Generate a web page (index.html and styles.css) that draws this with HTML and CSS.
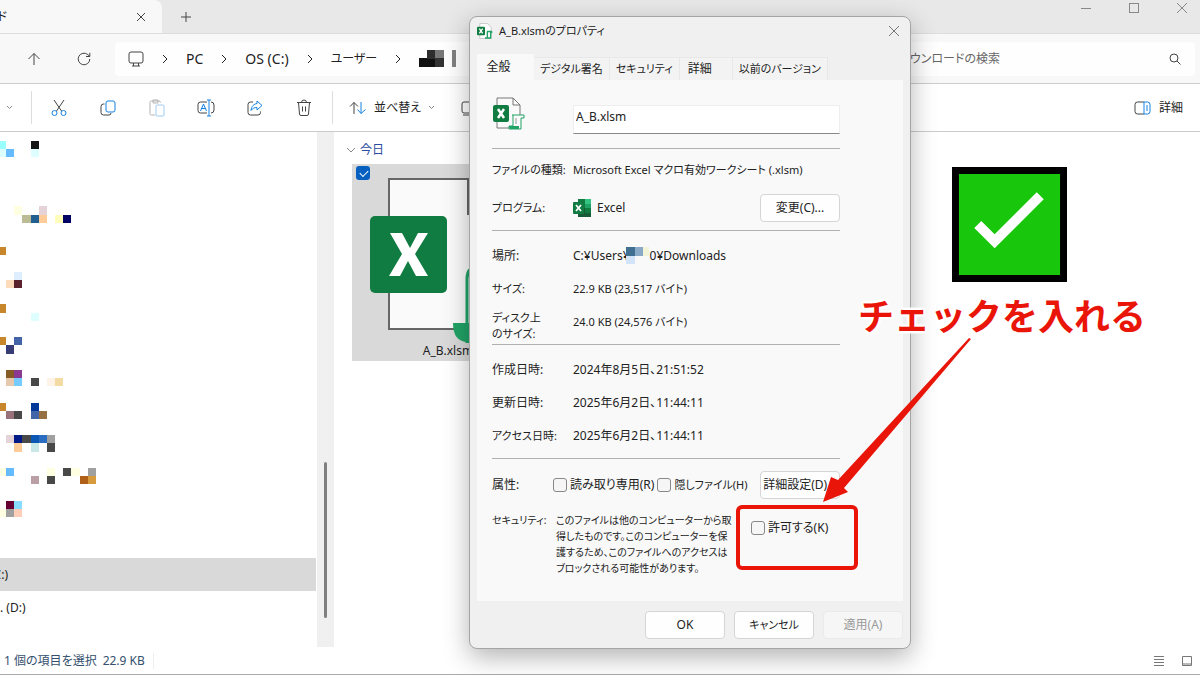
FILE: index.html
```
<!DOCTYPE html>
<html lang="ja">
<head>
    <meta charset="UTF-8">
    <meta name="viewport" content="width=device-width, initial-scale=1">
    <title>A_B.xlsmのプロパティ</title>
    <link rel="stylesheet" href="styles.css">
</head>
<body>

    <div class="explorer">

        <header class="tabbar">
            <div class="tab">
                <span class="tab-title">ド</span>
                <button class="plain" aria-label="タブを閉じる">
                    <svg width="10" height="10" viewBox="0 0 10 10"><path d="M1 1l8 8M9 1l-8 8"/></svg>
                </button>
            </div>
            <button class="plain new-tab" aria-label="新しいタブ">
                <svg width="12" height="12" viewBox="0 0 12 12"><path d="M6 1v10M1 6h10"/></svg>
            </button>
            <div class="window-buttons">
                <button class="plain" aria-label="最小化"><svg width="12" height="12" viewBox="0 0 12 12"><path d="M1 6.500h10"/></svg></button>
                <button class="plain" aria-label="最大化"><svg width="12" height="12" viewBox="0 0 12 12"><rect x="1.500" y="1.500" width="9" height="9"/></svg></button>
                <button class="plain" aria-label="閉じる"><svg width="12" height="12" viewBox="0 0 12 12"><path d="M1 1l10 10M11 1L1 11"/></svg></button>
            </div>
        </header>

        <div class="addressbar">
            <button class="plain" aria-label="上へ">
                <svg width="14" height="14" viewBox="0 0 14 14"><path d="M7 13V1.500M1.500 7L7 1.500 12.500 7"/></svg>
            </button>
            <button class="plain" aria-label="更新">
                <svg width="14" height="14" viewBox="0 0 14 14"><path d="M12.800 7a5.800 5.800 0 1 1-2-4.400L12.800 4.500M12.800 .8v3.700H9"/></svg>
            </button>
            <nav class="crumbs">
                <svg width="16" height="16" viewBox="0 0 16 16"><rect x="1" y="1" width="14" height="11" rx="2"/><path d="M5.500 12v3M10.500 12v3M4 15h8"/></svg>
                <svg class="chev" width="6" height="10" viewBox="0 0 6 10"><path d="M1 1l4 4-4 4"/></svg>
                <a href="#">PC</a>
                <svg class="chev" width="6" height="10" viewBox="0 0 6 10"><path d="M1 1l4 4-4 4"/></svg>
                <a href="#">OS (C:)</a>
                <svg class="chev" width="6" height="10" viewBox="0 0 6 10"><path d="M1 1l4 4-4 4"/></svg>
                <a href="#" class="kana">ユーザー</a>
                <svg class="chev" width="6" height="10" viewBox="0 0 6 10"><path d="M1 1l4 4-4 4"/></svg>
                <svg class="mosaic" width="38" height="17" viewBox="0 0 38 17">
                    <rect y="8" width="16" height="9" fill="#111"/><rect x="8" width="8" height="9" fill="#2e2e2e"/>
                    <rect x="16" width="9" height="9" fill="#777"/><rect x="16" y="8" width="9" height="9" fill="#333"/>
                    <rect x="33" width="4" height="17" fill="#808080"/>
                </svg>
            </nav>
            <label class="search">
                <input type="text" placeholder="ダウンロードの検索" aria-label="ダウンロードの検索">
                <svg width="12" height="12" viewBox="0 0 12 12"><circle cx="5" cy="5" r="4"/><path d="M8 8l3.500 3.500"/></svg>
            </label>
        </div>

        <div class="toolbar">
            <svg class="down" width="7" height="5" viewBox="0 0 7 5"><path d="M1 1l2.500 2.500L6 1"/></svg>
            <i class="split"></i>
            <div class="tools">
                <button class="plain" aria-label="切り取り">
                    <svg width="16" height="18" viewBox="0 0 16 18"><path d="M3 1l7.500 11M13 1L5.500 12"/><g class="blue"><circle cx="3.500" cy="14" r="2.500"/><circle cx="12.500" cy="14" r="2.500"/></g></svg>
                </button>
                <button class="plain" aria-label="コピー">
                    <svg width="16" height="18" viewBox="0 0 16 18"><path d="M4.500 5H3.500A2.500 2.500 0 0 0 1 7.500v6A2.500 2.500 0 0 0 3.500 16H9a2 2 0 0 0 2-2"/><rect class="blue" x="6" y="2" width="9" height="11" rx="2"/></svg>
                </button>
                <button class="plain" aria-label="貼り付け" disabled>
                    <svg width="16" height="18" viewBox="0 0 16 18"><path d="M6 16H2.500A1.500 1.500 0 0 1 1 14.500v-11A1.500 1.500 0 0 1 2.500 2H10a1.500 1.500 0 0 1 1.500 1.500M4 1h5v3H4z"/><rect class="blue" x="7" y="6" width="8" height="11" rx="1"/></svg>
                </button>
                <button class="plain" aria-label="名前の変更">
                    <svg width="18" height="18" viewBox="0 0 18 18"><path d="M10 3H3.500A2.500 2.500 0 0 0 1 5.500v6A2.500 2.500 0 0 0 3.500 14H10M14 3a3 3 0 0 1 3 3v5a3 3 0 0 1-3 3"/><path class="blue" d="M12 1v16M10 1h4M10 17h4M3.500 12l3-7 3 7M4.500 9.500h4"/></svg>
                </button>
                <button class="plain" aria-label="共有">
                    <svg width="16" height="18" viewBox="0 0 16 18"><path d="M6 3H3.500A2.500 2.500 0 0 0 1 5.500v8A2.500 2.500 0 0 0 3.500 16H11a2.500 2.500 0 0 0 2.500-2.500v-1"/><path class="blue" d="M10 2l5 4.500-5 4.500V8.500C7.500 8.500 6 9 4 11.500 4.500 7 7 5 10 4.500z"/></svg>
                </button>
                <button class="plain" aria-label="削除">
                    <svg width="16" height="18" viewBox="0 0 16 18"><path d="M1 3.500h14M5.500 3.500a2.500 2.500 0 0 1 5 0M2.500 3.500l1 11.500A1.500 1.500 0 0 0 5 16.500h6a1.500 1.500 0 0 0 1.500-1.500l1-11.500M6.500 7.500v5M9.500 7.500v5"/></svg>
                </button>
            </div>
            <i class="split"></i>
            <button class="plain sort">
                <svg width="18" height="14" viewBox="0 0 18 14"><path d="M5 13V1.500M1 5.500l4-4 4 4"/><path class="blue" d="M12 1v11.500M8.500 8.500l3.500 4 4.500-4"/></svg>
                並べ替え
                <svg class="down" width="7" height="5" viewBox="0 0 7 5"><path d="M1 1l2.500 2.500L6 1"/></svg>
            </button>
            <svg class="view" width="16" height="16" viewBox="0 0 16 16"><rect x="1" y="2" width="14" height="11" rx="2"/><path d="M2 15h12"/></svg>
            <button class="plain details">
                <svg width="17" height="14" viewBox="0 0 17 14"><path d="M10 1H3.500A2.500 2.500 0 0 0 1 3.500v7A2.500 2.500 0 0 0 3.500 13H10"/><path class="blue" d="M10 1h3.500A2.500 2.500 0 0 1 16 3.500v7a2.500 2.500 0 0 1-2.500 2.500H10zM12 5h2M12 7h2M12 9h2"/></svg>
                詳細
            </button>
        </div>

        <main class="body">
            <aside class="tree">
                <svg class="mosaic" width="98" height="376" viewBox="0.25 0 12 46" preserveAspectRatio="none">
                    <path fill="#9ff" d="M0 0h1v1H0z"/>
                    <path fill="#dff" d="M0 1h1v1H0zM4 1h1v1H4zM4 21h1v1H4z"/>
                    <path fill="#6bf" d="M1 1h1v1H1zM1 40h1v1H1z"/>
                    <path fill="#151515" d="M4 0h1v1H4z"/>
                    <path fill="#ffffe2" d="M2 8h1v1H2zM0 40h1v1H0zM6 40h1v1H6zM9 40h1v1H9zM0 45h1v1H0z"/>
                    <path fill="#e6d3d8" d="M5 8h1v1H5zM1 36h1v1H1z"/>
                    <path fill="#bcbc94" d="M3 9h1v1H3z"/>
                    <path fill="#205f8f" d="M4 9h1v1H4z"/>
                    <path fill="#ffcb98" d="M5 9h1v1H5zM2 37h1v1H2z"/>
                    <path fill="#ffb" d="M7 9h1v1H7z"/>
                    <path fill="#006" d="M8 9h1v1H8z"/>
                    <path fill="#c8862a" d="M0 13h1v1H0zM0 20h1v1H0zM0 24h1v1H0zM0 32h1v1H0z"/>
                    <path fill="#def" d="M2 16h1v1H2z"/>
                    <path fill="#fddcbc" d="M1 17h1v1H1z"/>
                    <path fill="#5a222c" d="M2 17h1v1H2z"/>
                    <path fill="#4464a8" d="M2 24h1v1H2zM4 33h1v1H4z"/>
                    <path fill="#383c74" d="M1 25h1v1H1z"/>
                    <path fill="#855c26" d="M1 28h1v1H1z"/>
                    <path fill="#8a3a90" d="M2 28h1v1H2z"/>
                    <path fill="#e7c9ae" d="M1 29h1v1H1z"/>
                    <path fill="#7cf" d="M2 29h1v1H2z"/>
                    <path fill="#484848" d="M4 29h1v1H4zM2 33h1v1H2zM3 36h1v1H3zM6 37h1v1H6zM8 40h1v1H8zM6 41h1v1H6z"/>
                    <path fill="#fff3e8" d="M6 29h1v1H6z"/>
                    <path fill="#f4dba4" d="M7 29h1v1H7z"/>
                    <path fill="#003899" d="M4 32h1v1H4z"/>
                    <path fill="#987279" d="M1 33h1v1H1z"/>
                    <path fill="#966f42" d="M5 33h1v1H5z"/>
                    <path fill="#001a88" d="M2 36h1v1H2z"/>
                    <path fill="#0a58b4" d="M4 36h1v1H4z"/>
                    <path fill="#2a6cc0" d="M5 36h1v1H5z"/>
                    <path fill="#a0a0a0" d="M6 36h1v1H6zM11 40h1v1h-1zM1 45h1v1H1z"/>
                    <path fill="#c8e8e8" d="M4 37h1v1H4z"/>
                    <path fill="#baa0a4" d="M4 41h1v1H4z"/>
                    <path fill="#b06018" d="M10 41h1v1h-1z"/>
                    <path fill="#d79b3e" d="M11 41h1v1h-1z"/>
                    <path fill="#603" d="M1 44h1v1H1z"/>
                    <path fill="#8df" d="M2 44h1v1H2z"/>
                    <path fill="#ffcdb8" d="M2 45h1v1H2z"/>
                </svg>
                <div class="drives">
                    <div class="drive selected"><span>C:)</span></div>
                    <div class="drive">. (D:)</div>
                </div>
            </aside>
            <div class="scrollbar"><div class="thumb"></div></div>
            <section class="files">
                <h2>
                    <svg class="down" width="10" height="7" viewBox="0 0 10 7"><path d="M1 1l4 4 4-4"/></svg>
                    今日
                </h2>
                <div class="file">
                    <input class="file-check" type="checkbox" aria-label="A_B.xlsm" checked>
                    <svg class="thumbnail" width="136" height="168" viewBox="0 0 136 168">
                        <path d="M19 4h79v35h39v115H19z" fill="#fafafa" stroke="#666" stroke-width="2"/>
                        <path d="M97 168V104q0-12 10-12h30v76z" fill="#fafafa" stroke="#21a366" stroke-width="3"/>
                        <path d="M83 148h53v19H98q-15 0-15-19z" fill="#21a366"/>
                        <rect y="41" width="77" height="77" rx="5" fill="#107c41"/>
                        <path d="M20 58h12l8 15 8-15h10L45 79l13 22H46l-8-15-8 15H19l13-22z" fill="#fff"/>
                    </svg>
                    <span class="file-name">A_B.xlsm</span>
                </div>
            </section>
        </main>

        <footer class="statusbar">
            <span>1 個の項目を選択</span>
            <span class="size">22.9 KB</span>
            <div class="layouts">
                <button class="plain" aria-label="一覧"><svg width="10" height="10" viewBox="0 0 10 10"><path d="M0 .5h10M0 3.500h10M0 6.500h10M0 9.500h10"/></svg></button>
                <button class="plain" aria-label="大アイコン"><svg width="10" height="10" viewBox="0 0 10 10"><path d="M.5 .5h9v9h-9zM.5 8h9"/></svg></button>
            </div>
        </footer>
    </div>

    <form class="dialog" role="dialog" aria-labelledby="dialog-title">
        <header class="titlebar">
            <svg width="16" height="16" viewBox="0 0 34 34"><path d="M6 1h16l8 8v24H6z" fill="#fff" stroke="#999"/><path d="M21 18h11M31 18v3M22 18v14h-5M22 32h7V18" fill="none" stroke="#21a366" stroke-width="3"/><rect y="8" width="17" height="18" rx="2" fill="#107c41" stroke="none"/><path d="M5 12l7 10M12 12L5 22" stroke="#fff" stroke-width="3"/></svg>
            <h1 id="dialog-title">A_B.xlsmのプロパティ</h1>
            <button type="button" class="plain" aria-label="閉じる"><svg width="12" height="12" viewBox="0 0 12 12"><path d="M1 1l10 10M11 1L1 11"/></svg></button>
        </header>

        <div class="tabs" role="tablist">
            <button type="button" role="tab" class="active">全般</button>
            <button type="button" role="tab">デジタル署名</button>
            <button type="button" role="tab">セキュリティ</button>
            <button type="button" role="tab" class="wide">詳細</button>
            <button type="button" role="tab">以前のバージョン</button>
        </div>

        <div class="panel">
            <div class="row name-row">
                <span class="label">
                    <svg width="34" height="34" viewBox="0 0 34 34"><path d="M5 1h16l7 7v23H5z" fill="#fafafa" stroke="#777"/><path d="M21 1v7h7" fill="none" stroke="#777"/><path d="M20 18h12v3h-3v11H17v-3h4V18" fill="#fafafa" stroke="#21a366"/><path d="M24 21v6" stroke="#999"/><path d="M17 29h10v3H19q-2 0-2-3z" fill="#21a366" stroke="none"/><rect x="1" y="8" width="16" height="17" rx="2" fill="#107c41" stroke="none"/><path d="M6 12l6 9M12 12l-6 9" stroke="#fff" stroke-width="2.500"/></svg>
                </span>
                <input type="text" value="A_B.xlsm" aria-label="ファイル名">
            </div>
            <hr>
            <div class="row type-row small"><span class="label">ファイルの種類:</span><span>Microsoft Excel マクロ有効ワークシート (.xlsm)</span></div>
            <div class="row program-row">
                <span class="label small">プログラム:</span>
                <svg class="excel" width="18" height="18" viewBox="0 0 18 18"><path d="M5 0h13v18H5z" fill="#21a366"/><path d="M5 0h7v9H5zM12 9h6v5h-6z" fill="#107c41"/><path d="M12 0h6v5h-6z" fill="#33c481"/><path d="M5 9h7v9H5zM12 14h6v4h-6z" fill="#185c37"/><rect y="3" width="11" height="12" rx="1" fill="#107c41"/><path d="M3 6l5 6M8 6l-5 6" stroke="#fff" stroke-width="1.800"/></svg>
                <span class="app">Excel</span>
                <button type="button" class="btn">変更(C)...</button>
            </div>
            <hr>
            <div class="group">
                <div class="row">
                    <span class="label">場所:</span>
                    <span>C:¥Users¥</span>
                    <svg class="mosaic user" width="24" height="17" viewBox="0 0 24 17"><rect width="9" height="9" fill="#416f91"/><rect x="9" width="8" height="9" fill="#8aa9c6"/><rect x="17" width="6" height="9" fill="#f3f3d8"/><rect y="9" width="9" height="8" fill="#d3e4fa"/></svg>
                    <span>0¥Downloads</span>
                </div>
                <div class="row small"><span class="label">サイズ:</span><span>22.9 KB (23,517 バイト)</span></div>
                <div class="row small"><span class="label two-line">ディスク上<br>のサイズ:</span><span>24.0 KB (24,576 バイト)</span></div>
            </div>
            <hr>
            <div class="group">
                <div class="row"><span class="label">作成日時:</span><span>2024年8月5日、21:51:52</span></div>
                <div class="row"><span class="label">更新日時:</span><span>2025年6月2日、11:44:11</span></div>
                <div class="row"><span class="label small">アクセス日時:</span><span>2025年6月2日、11:44:11</span></div>
            </div>
            <hr>
            <div class="row attr-row">
                <span class="label">属性:</span>
                <label><input type="checkbox">読み取り専用(R)</label>
                <label class="small"><input type="checkbox">隠しファイル(H)</label>
                <button type="button" class="btn">詳細設定(D)...</button>
            </div>
            <div class="row security-row">
                <span class="label">セキュリティ:</span>
                <p>このファイルは他のコンピューターから取<br>得したものです。このコンピューターを保<br>護するため、このファイルへのアクセスは<br>ブロックされる可能性があります。</p>
                <label><input type="checkbox">許可する(K)</label>
            </div>
        </div>

        <div class="actions">
            <button type="button" class="btn">OK</button>
            <button type="button" class="btn small">キャンセル</button>
            <button type="button" class="btn" disabled>適用(A)</button>
        </div>
    </form>

    <!-- 説明用の注釈 -->
    <svg class="sample-check" width="115" height="115" viewBox="0 0 116 116"><path d="M0 0h116v116H0z"/><path d="M7 7h102v102H7z" fill="#18c60c"/><path d="M26 58l17 17 46-46" fill="none" stroke="#fff" stroke-width="10"/></svg>
    <p class="note">チェックを入れる</p>
    <svg class="arrow" width="150" height="166" viewBox="822 337 150 166"><path d="M969 338l2 1-127 149 4 4-25 10 8-25 7 3z" fill="#ea1509"/></svg>
    <div class="mark"></div>

</body>
</html>
```

FILE: styles.css
```
*{
    box-sizing: border-box;
}

body,h1,h2,p{
    margin: 0;
    padding: 0;
}

body{
    font-family: "Noto Sans", "Noto Sans CJK JP", sans-serif;
    font-feature-settings: "palt";
    font-size: 12px;
    line-height: 16px;
    color: #222;
    background-color: #fff;
    overflow: hidden;
}

button,input{
    font: inherit;
    font-feature-settings: inherit;
    color: inherit;
}

svg{
    display: block;
    flex: none;
    fill: none;
    stroke: #444;
}

.mosaic,.thumbnail,.sample-check,.arrow,.excel{
    stroke: none;
}

.mosaic{
    shape-rendering: crispEdges;
}

.blue{
    stroke: #1682e0;
}

.plain{
    display: flex;
    align-items: center;
    justify-content: center;
    padding: 0;
    border: 0;
    background: none;
}

/* エクスプローラー */
.explorer{
    display: flex;
    flex-direction: column;
    height: 100vh;
    border-bottom: 1px solid #aaa;
}

.tabbar{
    display: flex;
    height: 33px;
    background-color: #e8e8e8;
}

.tab{
    display: flex;
    align-items: center;
    justify-content: space-between;
    width: 162px;
    padding-right: 16px;
    border-radius: 0 8px 0 0;
    background-color: #f8f8f8;
}

.tab-title{
    display: flex;
    justify-content: flex-end;
    width: 7px;
    overflow: hidden;
}

.new-tab{
    width: 48px;
}

.window-buttons{
    display: flex;
    height: 16px;
    margin-left: auto;
    padding-right: 12px;
    gap: 36px;
}

.window-buttons svg{
    stroke: #888;
}

.addressbar{
    display: flex;
    align-items: center;
    height: 51px;
    padding: 0 5px 0 27px;
    background-color: #f8f8f8;
    border-top: 1px solid #ddd;
    border-bottom: 1px solid #ccc;
}

.addressbar > .plain{
    width: 14px;
    height: 32px;
    margin-right: 36px;
}

.addressbar > .plain + .plain{
    margin-right: 24px;
}

.crumbs{
    display: flex;
    align-items: center;
    flex: 1;
    height: 34px;
    padding-left: 13px;
    gap: 18px;
    font-size: 14px;
    background-color: #fefefe;
    border-radius: 4px;
}

.crumbs a{
    color: inherit;
    text-decoration: none;
}

.crumbs .kana{
    font-size: 12px;
}

.chev{
    stroke: #222;
}

.search{
    display: flex;
    align-items: center;
    width: 310px;
    height: 34px;
    margin-left: 12px;
    padding: 0 14px;
    background-color: #fefefe;
    border-radius: 4px;
}

.search input{
    flex: 1;
    min-width: 0;
    padding: 0;
    border: 0;
    outline: none;
    background: none;
}

.search input::placeholder{
    color: #666;
}

.toolbar{
    display: flex;
    align-items: center;
    height: 48px;
    padding: 0 17px 0 6px;
    background-color: #fff;
    border-bottom: 1px solid #ccc;
}

.down{
    stroke: #888;
}

.split{
    width: 1px;
    height: 33px;
    margin-left: 18px;
    background-color: #ddd;
}

.tools{
    display: flex;
    gap: 33px;
    padding: 0 2px 0 19px;
}

.tools .plain{
    width: 16px;
}

.tools :disabled{
    opacity: .4;
}

.sort{
    gap: 7px;
    margin-left: 16px;
}

.view{
    margin-left: 26px;
}

.details{
    gap: 8px;
    margin-left: auto;
}

.body{
    display: flex;
    flex: 1;
    min-height: 0;
}

.tree{
    display: flex;
    flex-direction: column;
    justify-content: space-between;
    width: 317px;
    padding: 9px 1px 23px 0;
}

.drive{
    display: flex;
    align-items: center;
    height: 33px;
}

.drive span{
    display: flex;
    justify-content: flex-end;
    width: 8px;
    overflow: hidden;
}

.selected{
    background-color: #d9d9d9;
}

.scrollbar{
    display: flex;
    align-items: flex-end;
    justify-content: center;
    width: 17px;
    padding-bottom: 29px;
    background-color: #f0f0f0;
}

.thumb{
    width: 3px;
    height: 156px;
    border-radius: 2px;
    background-color: #808080;
}

.files{
    flex: 1;
    padding: 10px 0 0 12px;
}

.files h2{
    display: flex;
    align-items: center;
    gap: 4px;
    font-size: 12px;
    font-weight: 400;
    color: #2b4ba0;
}

.file{
    display: grid;
    grid-template-columns: 14px auto;
    gap: 0 4px;
    align-items: start;
    width: 192px;
    margin: 6px 0 0 6px;
    padding: 2px 4px;
    background-color: #d9d9d9;
}

.thumbnail{
    grid-row: 1;
    grid-column: 1 / 3;
    margin: 9px 0 0 14px;
}

.file-check{
    grid-row: 1;
    grid-column: 1;
    appearance: none;
    width: 14px;
    height: 14px;
    margin: 0;
    border-radius: 3px;
    background-color: #0560c0;
}

.file-check::after{
    content: "";
    display: block;
    width: 7px;
    height: 4px;
    margin: 4px 0 0 4px;
    border-left: 1px solid #fff;
    border-bottom: 1px solid #fff;
    transform: rotate(-45deg);
}

.file-name{
    grid-column: 1 / 3;
    text-align: center;
}

.statusbar{
    display: flex;
    align-items: center;
    height: 27px;
    padding: 0 8px 0 4px;
    gap: 6px;
    color: #34506e;
}

.size{
    padding-right: 8px;
    border-right: 1px solid #eee;
}

.layouts{
    display: flex;
    gap: 18px;
    margin-left: auto;
}

.layouts svg{
    stroke: #777;
}

/* プロパティ ダイアログ */
.dialog{
    position: absolute;
    left: 469px;
    top: 16px;
    width: 442px;
    padding: 0 7px 9px;
    border: 1px solid #a5a5a5;
    border-radius: 8px;
    background-color: #f0f0f0;
    box-shadow: 0 8px 26px rgba(0,0,0,.3);
}

.small{
    font-size: 11px;
}

.titlebar{
    display: flex;
    align-items: center;
    gap: 6px;
    height: 28px;
    padding-right: 3px;
}

.titlebar h1{
    flex: 1;
    font-size: 11px;
    font-weight: 400;
}

.titlebar .plain svg{
    stroke: #777;
}

.tabs{
    display: flex;
    align-items: flex-end;
    height: 35px;
    font-size: 11px;
}

.tabs button{
    height: 23px;
    padding: 0 6px;
    border: 1px solid #e8e8e8;
    border-width: 1px 1px 0 0;
    background-color: #f3f3f3;
}

.tabs .active{
    width: 57px;
    height: 26px;
    padding: 0 14px 0 0;
    border: 0;
    font-size: 12px;
    background-color: #f9f9f9;
}

.tabs .wide{
    padding: 0 20px 0 8px;
    font-size: 12px;
}

.panel{
    height: 521px;
    padding: 17px 63px 0 15px;
    background-color: #f9f9f9;
}

.panel hr{
    height: 1px;
    margin: 0 0 1px;
    border: 0;
    background-color: #b0b0b0;
}

.row{
    display: flex;
    align-items: center;
    height: 33px;
}

.label{
    flex: none;
    width: 81px;
}

.name-row{
    height: 51px;
    align-items: flex-start;
}

.name-row input{
    flex: 1;
    min-width: 0;
    height: 29px;
    margin-top: 8px;
    padding: 0 2px 6px;
    border: 1px solid #eee;
    border-bottom-color: #888;
    background-color: #fff;
}

.type-row{
    height: 40px;
}

.program-row{
    height: 40px;
    padding-bottom: 4px;
}

.app{
    margin-left: 6px;
}

.btn{
    width: 80px;
    height: 28px;
    padding: 0;
    border: 1px solid #d5d5d5;
    border-radius: 4px;
    background-color: #fefefe;
    white-space: nowrap;
}

.btn:disabled{
    color: #9a9a9a;
    border-color: #eaeaea;
    background-color: #f6f6f6;
}

.program-row .btn{
    margin-left: auto;
}

.group{
    padding: 7px 0 6px;
}

.user{
    margin-left: -4px;
}

.two-line{
    padding-top: 8px;
}

.attr-row{
    height: 50px;
}

.attr-row .label{
    width: 61px;
}

.panel label{
    display: flex;
    align-items: center;
    gap: 3px;
    white-space: nowrap;
}

.panel label input{
    appearance: none;
    width: 14px;
    height: 14px;
    margin: 0;
    border: 1px solid #888;
    border-radius: 3px;
    background-color: #f6f6f6;
}

.attr-row label + label{
    margin-left: 3px;
}

.attr-row .btn{
    margin-left: auto;
}

.security-row{
    height: auto;
    padding-top: 2px;
    align-items: flex-start;
}

.security-row .label{
    width: 64px;
    font-size: 10px;
}

.security-row p{
    width: 195px;
    font-size: 10px;
    white-space: nowrap;
}

.security-row label{
    margin-top: 8px;
}

.actions{
    display: flex;
    justify-content: flex-end;
    gap: 9px;
    padding-top: 10px;
}

/* 注釈 */
.sample-check{
    position: absolute;
    left: 952px;
    top: 167px;
}

.sample-check path:first-child{
    fill: #000;
}

.note{
    position: absolute;
    left: 858px;
    top: 297px;
    font-size: 36px;
    line-height: 40px;
    font-weight: 700;
    font-feature-settings: normal;
    white-space: nowrap;
    color: #ea1509;
    text-shadow: 0 0 3px #fff, 2px 2px 2px #fff, -2px -2px 2px #fff, 2px -2px 2px #fff, -2px 2px 2px #fff;
}

.arrow{
    position: absolute;
    left: 822px;
    top: 337px;
}

.mark{
    position: absolute;
    left: 736px;
    top: 505px;
    width: 122px;
    height: 65px;
    border: 4px solid #ea1509;
    border-radius: 6px;
}
```
